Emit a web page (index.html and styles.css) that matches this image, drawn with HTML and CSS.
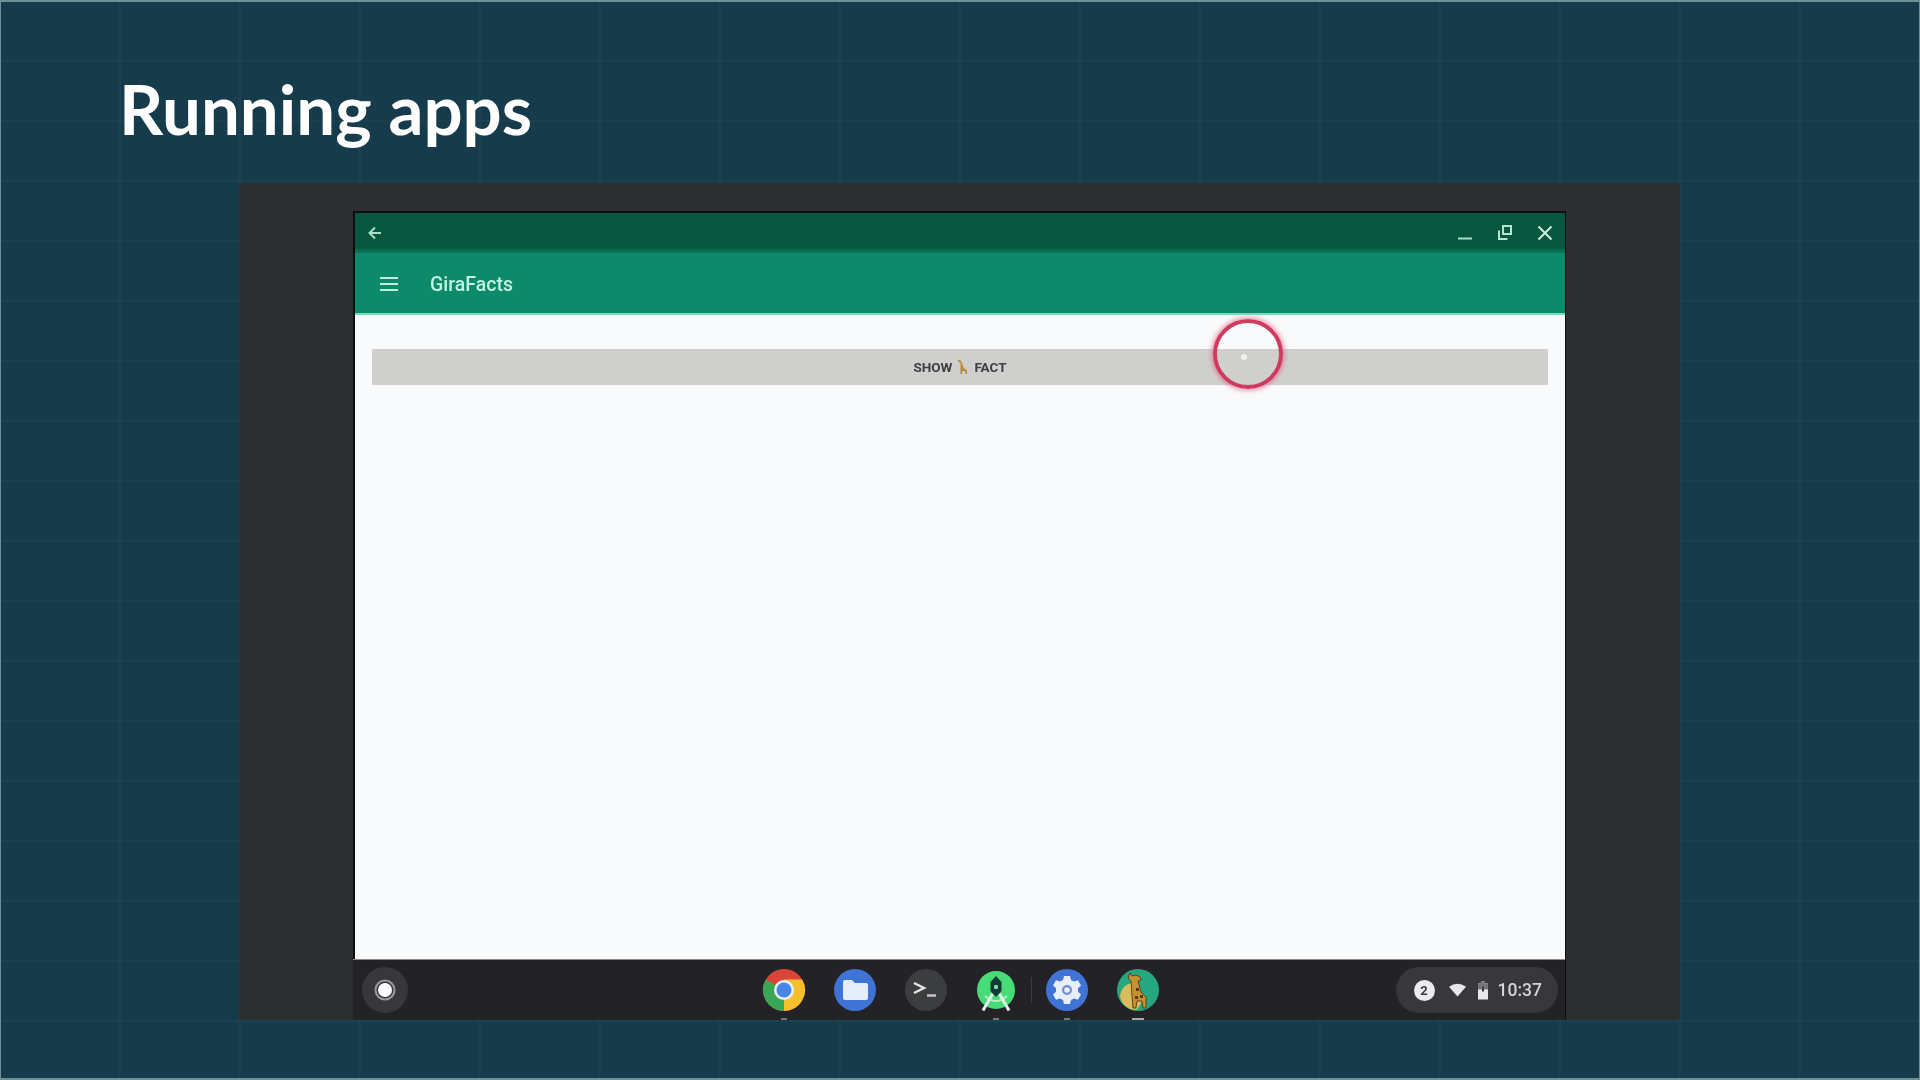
FILE: index.html
```html
<!DOCTYPE html>
<html lang="en">
<head>
<meta charset="utf-8">
<title>Running apps</title>
<link rel="stylesheet" href="styles.css">
</head>
<body>
<main class="slide">
  <h1 class="title">Running apps</h1>
  <section class="panel">
    <div class="window">
      <div class="titlebar">
        <svg class="ico" viewBox="0 0 20 20"><path d="M16 10H5M10 4.500 4.500 10l5.500 5.500" fill="none" stroke="#a9dcc9" stroke-width="2"/></svg>
        <div class="controls">
          <svg class="ico" viewBox="0 0 20 20"><path d="M3 15.500h14" stroke="#a9dcc9" stroke-width="2"/></svg>
          <svg class="ico" viewBox="0 0 20 20"><path d="M8 3h8v8H8zM4 7.500V16h8.500" fill="none" stroke="#b9e3d4" stroke-width="2"/></svg>
          <svg class="ico" viewBox="0 0 20 20"><path d="M3.500 3.500l13 13M16.500 3.500l-13 13" stroke="#cdeee2" stroke-width="2"/></svg>
        </div>
      </div>
      <div class="appbar">
        <svg class="menu" viewBox="0 0 20 16"><path d="M1 2h18M1 8h18M1 14h18" stroke="#bfeedd" stroke-width="2"/></svg>
        <span class="apptitle">GiraFacts</span>
      </div>
      <div class="content">
        <div class="factbtn">
          <span class="btnlabel">SHOW</span>
          <svg class="giraffe-mini" viewBox="0 0 12 16"><path d="M1 1l3 .5 3 8 3 1.500V15H8.500l-.5-3H5.500L5 15H3.500V9.500L3.500 4 1 2.500z" fill="#b88a3c"/></svg>
          <span class="btnlabel">FACT</span>
          <div class="touch"><span class="touchdot"></span></div>
        </div>
      </div>
      <footer class="shelf">
        <div class="launcher"><span class="launcher-dot"></span></div>
        <div class="apps">
          <div class="app">
            <svg class="appicon" viewBox="0 0 44 44">
              <circle cx="22" cy="22" r="21" fill="#db4437"/>
              <path d="M22 22 3.800 11.500A21 21 0 0 0 22 43z" fill="#3aa757"/>
              <path d="M22 22 22 43A21 21 0 0 0 40.200 11.500H22z" fill="#f5c02b"/>
              <circle cx="22" cy="22" r="10" fill="#e8f0fe"/><circle cx="22" cy="22" r="7.500" fill="#4a86e8"/>
            </svg>
            <span class="pip"></span>
          </div>
          <div class="app">
            <svg class="appicon" viewBox="0 0 44 44">
              <circle cx="22" cy="22" r="21" fill="#3f73d6"/>
              <path d="M10 14a2 2 0 0 1 2-2h7l3 3h11a2 2 0 0 1 2 2v13a2 2 0 0 1-2 2H12a2 2 0 0 1-2-2z" fill="#e4eefb"/>
            </svg>
          </div>
          <div class="app">
            <svg class="appicon" viewBox="0 0 44 44">
              <circle cx="22" cy="22" r="21" fill="#3c3d3f"/>
              <path d="M10 15l10 5-10 5" fill="none" stroke="#e6e6e6" stroke-width="2.500"/>
              <path d="M23 27.500h9" stroke="#c4c4c4" stroke-width="2.500"/>
            </svg>
          </div>
          <div class="app">
            <svg class="appicon" viewBox="0 0 44 44">
              <circle cx="22" cy="22" r="19" fill="#46dc78"/>
              <path d="M11 28Q22 38 33 28" fill="none" stroke="#b5edc8" stroke-width="2"/>
              <path d="M18.500 26 9 42.500M25.500 26 35 42.500" stroke="#e4efe8" stroke-width="3"/>
              <path d="M22 8l5.500 6v9l-5.500 6-5.500-6v-9z" fill="#0f3a36"/>
              <circle cx="22" cy="19" r="2.200" fill="#8fd4ad"/>
            </svg>
            <span class="pip"></span>
          </div>
          <span class="divider"></span>
          <div class="app">
            <svg class="appicon" viewBox="0 0 44 44">
              <circle cx="22" cy="22" r="21" fill="#3f73d6"/>
              <path d="M19 8h6l1 4 3 1.500 4-1.300 3 5.200-3 2.800v3.600l3 2.800-3 5.200-4-1.300L26 32l-1 4h-6l-1-4-3-1.500-4 1.300-3-5.200 3-2.800v-3.600l-3-2.800 3-5.200 4 1.300L18 12z" fill="#e8eefb"/>
              <circle cx="22" cy="22" r="5" fill="#6c8fd8"/>
              <circle cx="22" cy="22" r="2.800" fill="#e8eefb"/>
            </svg>
            <span class="pip"></span>
          </div>
          <div class="app">
            <svg class="appicon" viewBox="0 0 44 44">
              <circle cx="22" cy="22" r="21" fill="#27a77f"/>
              <path d="M4 28C5 20 11 15 17 15c5 1 9 8 9 14s-3 10-6 13C12 42 5 36 4 28z" fill="#d9bd5c"/>
              <path d="M14 5l2 3 4-1 4 2 1 3-3 1 3 11 5 5v11h-3l-1-7h-5l-1 7h-3l-1-13-1-14-3-3z" fill="#c9902f" stroke="#4a2f0e" stroke-width=".8"/>
              <path d="M20 20h3v3h-3zM24 27h3v3h-3zM19 28h3v3h-3z" fill="#5b3a12"/>
            </svg>
            <span class="pip pip-wide"></span>
          </div>
        </div>
        <div class="tray">
          <span class="badge">2</span>
          <svg class="wifi" viewBox="0 0 18 14"><path d="M0 3.500Q9-2.500 18 3.500L9 14z" fill="#e8e8e8"/></svg>
          <svg class="battery" viewBox="0 0 12 18"><path d="M4 0h4v2h3v16H1V2h3z" fill="#e8e8e8"/><path d="M4 0h4v2h3v6H1V2h3z" fill="#77777a"/><path d="M6 5v5" stroke="#3a3a3e" stroke-width="2"/></svg>
          <span class="clock">10:37</span>
        </div>
      </footer>
    </div>
  </section>
</main>
</body>
</html>
```
FILE: styles.css
```css
* { box-sizing: border-box; }
html, body { margin: 0; padding: 0; }
body { width: 1920px; height: 1080px; overflow: hidden; background: #163c4c; font-family: "Roboto", "Liberation Sans", sans-serif; }
.slide {
  width: 1920px; height: 1080px;
  background-color: #163c4c;
  background-image:
    repeating-linear-gradient(90deg, transparent 0 117px, rgba(255,255,255,.022) 117px 120px),
    repeating-linear-gradient(180deg, transparent 0 58px, rgba(255,255,255,.02) 58px 60px);
  border: solid #6f8f98; border-width: 2px 1px 2px 1px;
  display: flex; flex-direction: column;
  filter: blur(.5px);
}
.title {
  margin: 0; height: 181px; padding: 69px 0 0 118px;
  font-family: "Lato", sans-serif; font-weight: 700; font-size: 69px; line-height: 76px; color: #fff;
}
.panel {
  align-self: flex-start; margin-left: 238px;
  width: 1441px; height: 837px; background: #2c2e2f;
  padding: 28px 114px 0 114px;
}
.window {
  height: 809px; border: solid #0c0d0e; border-width: 2px 1px 0 2px;
  display: flex; flex-direction: column; background: #f9fafb;
}
.titlebar {
  height: 40px; flex: none;
  background: linear-gradient(180deg, #07573f 0 34px, #0a7a5a 40px);
  display: flex; align-items: center; justify-content: space-between; padding: 0 10px 0 10px;
}
.ico { width: 20px; height: 20px; display: block; }
.controls { display: flex; gap: 20px; }
.appbar {
  height: 62px; flex: none; background: #0c8a69; border-bottom: 2px solid #6fe0bb;
  display: flex; align-items: center; padding: 2px 0 0 24px;
}
.menu { width: 20px; height: 16px; display: block; }
.apptitle { margin-left: 31px; font-size: 19.500px; font-weight: 500; color: #bff3e2; }
.content { flex: 1; padding: 34px 17px 0 17px; background: #f9fafb; }
.factbtn {
  position: relative; height: 36px; background: #cfd0ce;
  display: flex; align-items: center; justify-content: center; gap: 5px;
}
.btnlabel { font-size: 13.500px; font-weight: 700; color: #3e3f3e; }
.giraffe-mini { width: 12px; height: 16px; display: block; }
.touch {
  position: absolute; left: 841px; top: -30px; width: 70px; height: 70px; border-radius: 50%;
  border: 4px solid #cf3a5e; box-shadow: 0 0 4px 2px rgba(232,80,120,.55);
  display: flex; align-items: center; justify-content: center;
}
.touchdot { width: 6px; height: 6px; border-radius: 50%; background: #f1f1f1; margin: 6px 8px 0 0; }
.shelf {
  height: 61px; flex: none; margin-left: -2px; background: #232327; border-top: 1px solid #8a8a8a;
  display: grid; grid-template-columns: 1fr auto 1fr; align-items: center; padding: 0 7px 0 9px;
}
.launcher {
  width: 46px; height: 46px; border-radius: 50%; background: #38383c;
  display: flex; align-items: center; justify-content: center;
}
.launcher-dot { width: 14px; height: 14px; border-radius: 50%; background: #fff; box-shadow: 0 0 0 1.500px #38383c, 0 0 0 3.500px #9a9a9c; }
.apps { display: flex; align-items: center; padding-left: 2px; }
.app { position: relative; width: 70.800px; height: 44px; display: flex; justify-content: center; }
.appicon { width: 44px; height: 44px; display: block; }
.pip { position: absolute; left: 50%; bottom: -8px; width: 6px; height: 2px; margin-left: -3px; background: #77787a; }
.pip-wide { width: 12px; margin-left: -6px; background: #a8a8a8; }
.divider { width: 1px; height: 26px; background: #3d3e41; margin: 0 -.500px; }
.tray {
  justify-self: end; height: 46px; border-radius: 23px; background: #38383c;
  display: flex; align-items: center; padding: 0 16px 0 18px;
}
.badge {
  width: 21px; height: 21px; border-radius: 50%; background: #ececec; color: #3a3a3e;
  font-size: 13px; font-weight: 700; display: flex; align-items: center; justify-content: center;
}
.wifi { width: 17px; height: 14px; margin-left: 14px; display: block; }
.battery { width: 12px; height: 19px; margin-left: 11px; display: block; }
.clock { margin-left: 9px; font-size: 17.500px; font-weight: 500; color: #d4d4d6; }
```
